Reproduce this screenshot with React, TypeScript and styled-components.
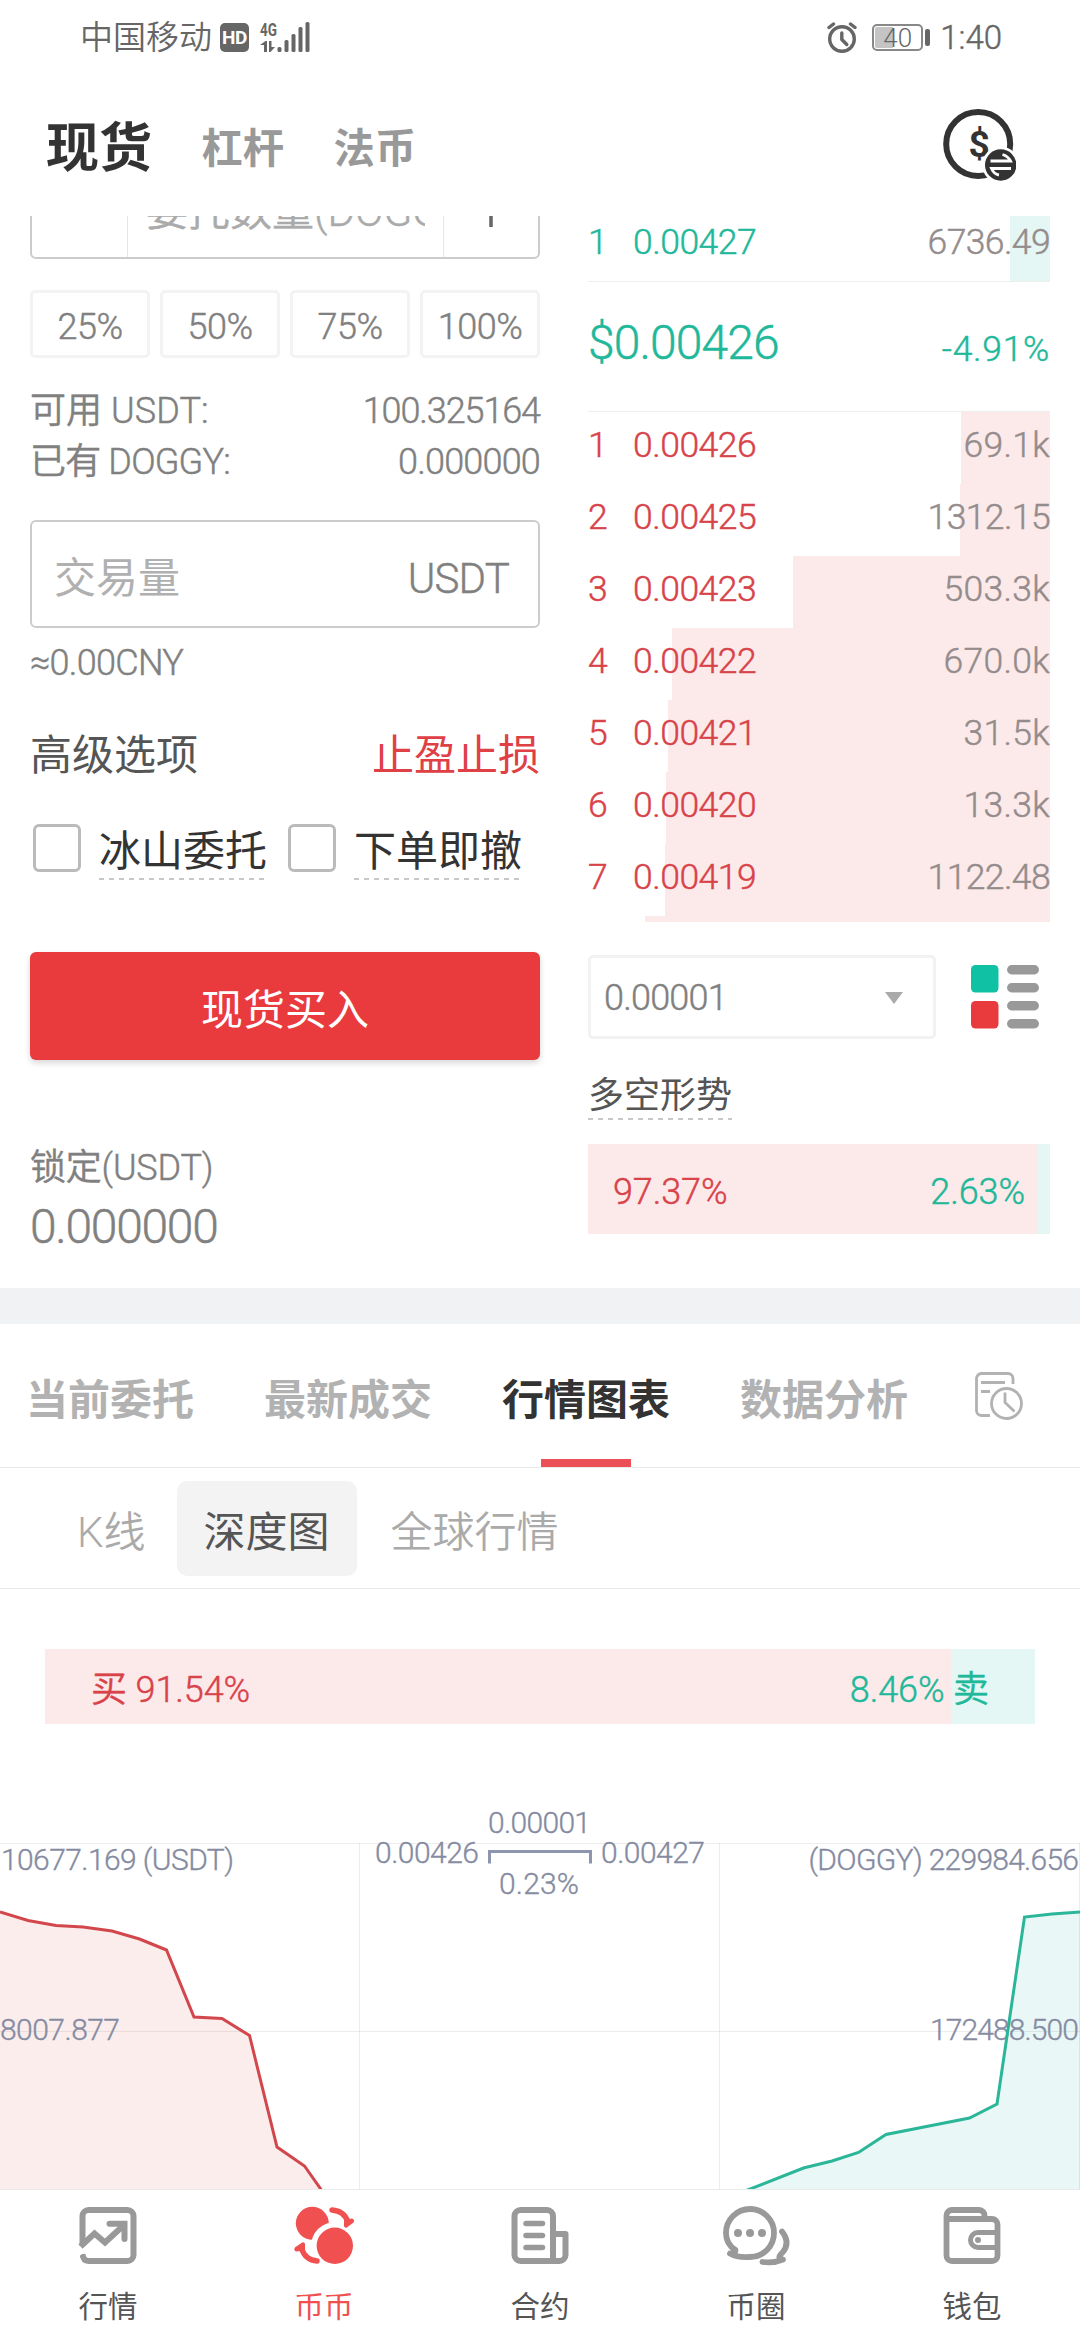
import React from "react";
import styled, { createGlobalStyle } from "styled-components";

const RED = "#e93a3d";
const GREEN = "#1fb89a";
const RED_SOFT = "#fceaea";
const GREEN_SOFT = "#e4f7f5";

const GlobalStyle = createGlobalStyle`
  * { box-sizing: border-box; }
  html, body { margin: 0; padding: 0; background: #fff; }
  body {
    font-family: Roboto, "Noto Sans CJK SC", sans-serif;
    font-size: 36px;
    color: #808080;
  }
`;

/* Weight between Roboto Light and Regular, used for all figures. */
const book = `
  font-weight: 350;
  -webkit-text-stroke: 0.45px currentColor;
`;

const Screen = styled.main`
  width: 1080px;
  height: 2340px;
  display: flex;
  flex-direction: column;
  overflow: hidden;
  background: #fff;
  > * { flex-shrink: 0; }
`;

/* ---------- status bar ---------- */
const StatusBar = styled.header`
  height: 74px;
  padding: 0 78px 0 80px;
  display: flex;
  align-items: center;
  justify-content: space-between;
  color: #666;
`;
const StatusGroup = styled.div`
  display: flex;
  align-items: center;
`;
const Carrier = styled.span`
  font-size: 33px;
  line-height: 40px;
  padding-top: 2px;
  font-weight: 350;
  margin-right: 8px;
`;
const HdBadge = styled.span`
  width: 29px;
  height: 29px;
  border-radius: 5px;
  background: #666;
  color: #fff;
  font-size: 19px;
  font-weight: 700;
  line-height: 29px;
  text-align: center;
  letter-spacing: -0.5px;
  margin-right: 11px;
`;
const Battery = styled.span`
  width: 51px;
  height: 27px;
  margin: 0 2px 0 15px;
  border: 2px solid #888;
  border-radius: 5px;
  padding: 1px;
  font-size: 26px;
  font-weight: 300;
  line-height: 22px;
  text-align: center;
  background: linear-gradient(90deg, #c4c4c4 40%, transparent 40%) content-box;
`;
const BatteryTip = styled.span`
  width: 5px;
  height: 17px;
  border-radius: 2px;
  background: #666;
  margin-right: 10px;
`;
const Clock = styled.span`
  font-size: 33px;
  line-height: 40px;
  padding-top: 1px;
  ${book}
`;

/* ---------- page header ---------- */
const PageHeader = styled.nav`
  height: 142px;
  padding: 0 64px 0 46px;
  display: flex;
  align-items: center;
  justify-content: space-between;
`;
const MarketTabs = styled.div`
  display: flex;
  align-items: center;
  gap: 49.5px;
  padding-top: 8px;
`;
const MarketTab = styled.span<{ $active?: boolean }>`
  font-size: ${(p) => (p.$active ? 53 : 41.3)}px;
  line-height: 60px;
  font-weight: 700;
  color: ${(p) => (p.$active ? "#333" : "#999")};
`;

/* ---------- trading panel ---------- */
const TradePanel = styled.section`
  height: 1072px;
  padding: 0 30px;
  display: flex;
  gap: 48px;
  overflow: hidden;
`;
const OrderForm = styled.div`
  width: 510px;
  display: flex;
  flex-direction: column;
  > * { flex-shrink: 0; }
`;
const QuantityBox = styled.div`
  height: 108px;
  margin-top: -65px;
  border: 2px solid #ccc;
  border-radius: 6px;
  display: grid;
  grid-template-columns: 95px minmax(0, 1fr) 94px;
  align-items: stretch;
`;
const StepCell = styled.div`
  display: flex;
  align-items: center;
  justify-content: center;
`;
const QuantityField = styled.div`
  border: solid #e6e6e6;
  border-width: 0 1px;
  padding: 7px 18px 0 18px;
  display: flex;
  min-width: 0;
`;
const Placeholder = styled.span`
  flex: 1;
  min-width: 0;
  overflow: hidden;
  white-space: nowrap;
  font-size: 42px;
  line-height: 104px;
  height: 97px;
  color: #aaa;
  ${book}
`;
const PercentRow = styled.div`
  margin-top: 31px;
  display: grid;
  grid-template-columns: repeat(4, 120px);
  gap: 10px;
`;
const PercentButton = styled.button`
  height: 68px;
  padding: 4px 0 0;
  border: 3px solid #f3f3f3;
  border-radius: 5px;
  background: #fff;
  font: 350 36px/60px Roboto, sans-serif;
  letter-spacing: -0.5px;
  color: #808080;
  ${book}
`;
const BalanceList = styled.div`
  margin-top: 27px;
`;
const BalanceRow = styled.div`
  height: 51px;
  display: flex;
  justify-content: space-between;
  line-height: 53px;
  ${book}
  color: #808080;
`;
const Tracked = styled.span<{ $tracking: number }>`
  letter-spacing: ${(p) => p.$tracking}px;
`;
const AmountInput = styled.div`
  margin-top: 33px;
  height: 108px;
  border: 2px solid #ccc;
  border-radius: 6px;
  padding: 9px 29px 0 22px;
  display: flex;
  justify-content: space-between;
  align-items: center;
  font-size: 42px;
  line-height: 60px;
  color: #808080;
`;
const AmountHint = styled.span`
  color: #b0b0b0;
`;
const AmountUnit = styled.span`
  letter-spacing: -0.8px;
  ${book}
`;
const Approx = styled.div`
  margin-top: 14px;
  height: 40px;
  line-height: 42px;
  ${book}
  letter-spacing: -0.7px;
  color: #808080;
`;
const AdvancedRow = styled.div`
  margin-top: 48px;
  height: 50px;
  display: flex;
  justify-content: space-between;
  font-size: 42px;
  line-height: 52px;
  color: #555;
`;
const StopLink = styled.span`
  color: #df4045;
`;
const CheckRow = styled.div`
  margin-top: 44px;
  height: 48px;
  padding-left: 3px;
  display: flex;
  align-items: flex-start;
`;
const CheckBox = styled.span`
  width: 48px;
  height: 48px;
  border: 3px solid #bbb;
  border-radius: 6px;
  margin-right: 18px;
  flex: none;
`;
const dashed = `
  background: repeating-linear-gradient(90deg, #c8c8c8 0 5px, transparent 5px 10px) left bottom / 100% 2px no-repeat;
`;
const CheckLabel = styled.span`
  flex: none;
  height: 56px;
  margin-right: 21px;
  font-size: 42px;
  line-height: 56px;
  white-space: nowrap;
  color: #333;
  ${dashed}
`;
const BuyButton = styled.button`
  margin-top: 80px;
  height: 108px;
  padding: 9px 0 0;
  border: 0;
  border-radius: 6px;
  background: ${RED};
  box-shadow: 0 3px 6px rgba(0, 0, 0, 0.16);
  color: #fff;
  font: 400 42px/60px Roboto, "Noto Sans CJK SC", sans-serif;
`;
const LockedLabel = styled.div`
  margin-top: 87px;
  height: 40px;
  line-height: 43px;
  ${book}
  letter-spacing: -0.2px;
  color: #808080;
`;
const LockedValue = styled.div`
  margin-top: 13px;
  height: 52px;
  font-size: 48px;
  line-height: 54px;
  ${book}
  letter-spacing: -1.3px;
  color: #808080;
`;

/* ---------- order book ---------- */
const OrderBook = styled.div`
  width: 462px;
  display: flex;
  flex-direction: column;
  > * { flex-shrink: 0; }
`;
const BookRow = styled.div<{ $side: "buy" | "sell"; $depth: number }>`
  height: 72px;
  display: grid;
  grid-template-columns: 45px 1fr auto;
  font-size: 35.5px;
  line-height: 67px;
  ${book}
  letter-spacing: -0.5px;
  color: ${(p) => (p.$side === "sell" ? GREEN : "#d8434a")};
  background: linear-gradient(
    ${(p) => (p.$side === "sell" ? GREEN_SOFT : RED_SOFT)},
    ${(p) => (p.$side === "sell" ? GREEN_SOFT : RED_SOFT)}
  ) right / ${(p) => p.$depth}px 100% no-repeat;
`;
const BookAmount = styled.span<{ $wide?: boolean }>`
  color: #948c8c;
  letter-spacing: ${(p) => (p.$wide ? 0.3 : -0.6)}px;
`;
const Asks = styled.div`
  margin-top: -7px;
`;
const Bids = styled.div`
  height: 510px;
  overflow: hidden;
`;
const LastPrice = styled.div`
  height: 131px;
  border: solid #eee;
  border-width: 1px 0;
  display: flex;
  justify-content: space-between;
  color: ${GREEN};
  ${book}
`;
const PriceValue = styled.span`
  font-size: 48px;
  line-height: 122px;
  letter-spacing: -0.9px;
`;
const PriceChange = styled.span`
  font-size: 35.5px;
  line-height: 134px;
  letter-spacing: 0.7px;
`;
const PrecisionRow = styled.div`
  margin-top: 33px;
  height: 84px;
  padding-right: 11px;
  display: flex;
  align-items: center;
  justify-content: space-between;
`;
const PrecisionSelect = styled.div`
  width: 348px;
  height: 84px;
  border: 3px solid #f2f2f2;
  border-radius: 5px;
  padding: 2px 30px 0 13px;
  display: flex;
  align-items: center;
  justify-content: space-between;
  line-height: 76px;
  ${book}
  letter-spacing: -0.8px;
  color: #808080;
`;
const Caret = styled.span`
  border: solid transparent;
  border-width: 12px 9px 0;
  border-top-color: #aaa;
`;
const SentimentLabel = styled.span`
  margin-top: 35px;
  height: 46px;
  align-self: flex-start;
  line-height: 45px;
  color: #555;
  ${dashed}
`;
const RatioBar = styled.div<{ $buy: number; $height: number; $pad: number }>`
  height: ${(p) => p.$height}px;
  padding: 6px ${(p) => p.$pad}px 0;
  display: flex;
  align-items: center;
  justify-content: space-between;
  ${book}
  letter-spacing: -0.1px;
  line-height: 48px;
  background: linear-gradient(90deg, ${RED_SOFT} ${(p) => p.$buy}%, ${GREEN_SOFT} ${(p) => p.$buy}%);
`;
const BuyText = styled.span`
  color: #d8434a;
`;
const SellText = styled.span`
  color: ${GREEN};
`;
const Sentiment = styled.div`
  margin-top: 24px;
`;

/* ---------- chart section ---------- */
const Divider = styled.div`
  height: 36px;
  background: #f0f2f4;
`;
const SectionTabs = styled.nav`
  height: 144px;
  padding: 0 57px 0 26px;
  border-bottom: 1px solid #e8eaea;
  display: flex;
  align-items: stretch;
  justify-content: space-between;
`;
const TabList = styled.div`
  display: flex;
  gap: 70px;
`;
const SectionTab = styled.span<{ $active?: boolean }>`
  display: flex;
  flex-direction: column;
  align-items: center;
  justify-content: space-between;
  font-size: 42px;
  font-weight: 700;
  line-height: 153px;
  height: 143px;
  color: ${(p) => (p.$active ? "#333" : "#b2b2b2")};
  &::after {
    content: "";
    width: 90px;
    height: 8px;
    flex: none;
    margin-top: -18px;
    background: ${(p) => (p.$active ? "#ea5055" : "transparent")};
  }
`;
const HistoryIcon = styled.svg`
  width: 48px;
  height: 48px;
  margin-top: 48px;
`;
const ChartTabs = styled.nav`
  height: 121px;
  border-bottom: 1px solid #e8eaea;
  padding: 0 49px;
  display: flex;
  align-items: center;
`;
const ChartTab = styled.span<{ $active?: boolean }>`
  height: 95px;
  padding: 4px ${(p) => (p.$active ? 27 : 28)}px 0;
  margin-right: ${(p) => (p.$active ? 6 : 3)}px;
  border-radius: 10px;
  font-size: 42px;
  line-height: 95px;
  font-weight: ${(p) => (p.$active ? 400 : 350)};
  color: ${(p) => (p.$active ? "#555" : "#aaa")};
  background: ${(p) => (p.$active ? "#f3f3f3" : "transparent")};
`;
const DepthSummary = styled.div`
  margin: 60px 45px 0;
`;
const DepthChart = styled.svg`
  display: block;
  width: 1080px;
  height: 389px;
  margin-top: 76px;
  text {
    font-family: Roboto, sans-serif;
    font-size: 30px;
    font-weight: 350;
    fill: #858ba1;
    stroke: #858ba1;
    stroke-width: 0.35px;
  }
`;

/* ---------- bottom navigation ---------- */
const BottomNav = styled.nav`
  height: 151px;
  border-top: 1px solid #e8eaea;
  display: grid;
  grid-template-columns: repeat(5, 1fr);
`;
const NavItem = styled.a<{ $active?: boolean }>`
  display: flex;
  flex-direction: column;
  align-items: center;
  padding-top: 12px;
  color: ${(p) => (p.$active ? "#f05050" : "#999")};
  svg { width: 72px; height: 68px; }
`;
const NavLabel = styled.span<{ $active?: boolean }>`
  margin-top: 15px;
  font-size: 29.5px;
  line-height: 44px;
  color: ${(p) => (p.$active ? "#f05050" : "#555")};
`;

const SignalIcon = () => (
  <svg width="52" height="32" viewBox="0 0 52 32" fill="#666" overflow="visible">
    <text x="0" y="14.5" fontFamily="Roboto" fontWeight="700" fontSize="19" textLength="17" lengthAdjust="spacingAndGlyphs">4G</text>
    <path d="M4 31V24H0L5.5 20H7V31ZM9 20H11.500V26H15L10.500 31H9Z" />
    <rect x="17.500" y="26" width="4" height="5" rx="1.500" />
    <rect x="24.500" y="19" width="4" height="12" rx="1.500" />
    <rect x="31.500" y="13" width="4" height="18" rx="1.500" />
    <rect x="38.500" y="6" width="4" height="25" rx="1.500" />
    <rect x="45.500" y="1" width="4" height="30" rx="1.500" />
  </svg>
);

const AlarmIcon = () => (
  <svg width="30" height="31" viewBox="0 0 30 31" fill="none" stroke="#666" strokeWidth="3.400" strokeLinecap="round">
    <circle cx="15" cy="17" r="12.300" />
    <path d="M14.800 11v6.500l5 5" strokeLinejoin="round" />
    <path d="M2 5.500 6.500 2M28 5.500 23.500 2" />
  </svg>
);

const CurrencyIcon = () => (
  <svg width="74" height="74" viewBox="0 0 74 74">
    <circle cx="36.200" cy="36" r="32" fill="none" stroke="#333" strokeWidth="6" />
    <text x="37" y="48.500" textAnchor="middle" fontFamily="Roboto" fontWeight="700" fontSize="37" fill="#333">$</text>
    <circle cx="58.700" cy="57" r="18.500" fill="#fff" />
    <circle cx="58.700" cy="57" r="15.700" fill="#333" />
    <path d="M48.500 53H68.500C67 50 64 47.500 60.500 46.500M69 60.500H49.500C51 64 54 66.500 57 67" fill="none" stroke="#fff" strokeWidth="2.800" />
  </svg>
);

const BookModeIcon = () => (
  <svg width="68" height="64" viewBox="0 0 68 64">
    <rect width="27.500" height="27.500" rx="4.500" fill="#10c2a3" />
    <rect y="36" width="27.500" height="27.500" rx="4.500" fill={RED} />
    {[0, 18, 36, 54].map((y) => (
      <rect key={y} x="36" y={y} width="32" height="9.500" rx="4.700" fill="#999" />
    ))}
  </svg>
);

const marketIcon = (
  <svg viewBox="-7.500 -5 72 68" fill="none" stroke="currentColor" strokeWidth="6" strokeLinecap="round">
    <path d="M3 39V9a6 6 0 0 1 6-6H48a6 6 0 0 1 6 6V48a6 6 0 0 1-6 6H9C6 54 3.500 52 3 47" strokeLinecap="butt" />
    <path d="M1 39.500 15 26.500 25.500 35.500 45 17.500" strokeLinecap="butt" />
    <path d="M30 16.800H45V32" strokeLinejoin="miter" />
    <path d="M-2 48.500 10 38.500" stroke="#fff" strokeWidth="3.500" strokeLinecap="butt" />
  </svg>
);

const coinIcon = (
  <svg viewBox="-7 -5 72 68" fill="currentColor">
    <circle cx="17.300" cy="16.300" r="16.500" />
    <circle cx="39.800" cy="38.800" r="23.700" fill="#fff" />
    <circle cx="39.800" cy="38.800" r="18.200" />
    <path d="M37 3C45 3.500 50.500 8 53 15" fill="none" stroke="currentColor" strokeWidth="5.500" strokeLinecap="round" />
    <path d="M57 11.500a2.500 2.500 0 0 1 1.500 4l-6 4.500a2 2 0 0 1-3.500-1.500L49 13Z" />
    <path d="M22 54C14 53.500 9 49 6.500 41.500" fill="none" stroke="currentColor" strokeWidth="5.500" strokeLinecap="round" />
    <path d="M1 44.500a2.500 2.500 0 0 1-.5-4.500L6.500 36a2 2 0 0 1 3.500 1.500L10 43.500Z" />
  </svg>
);

const contractIcon = (
  <svg viewBox="-7.500 -5 72 68" fill="none" stroke="currentColor" strokeWidth="6" strokeLinecap="round">
    <path d="M41.500 54H9a6 6 0 0 1-6-6V9a6 6 0 0 1 6-6H35.500a6 6 0 0 1 6 6V54H48a6 6 0 0 0 6-6V27H43" strokeLinejoin="round" />
    <path d="M14.500 16.500H31M14.500 28.500H31M14.500 40.500H31" strokeWidth="5.500" />
  </svg>
);

const communityIcon = (
  <svg viewBox="-3 -5 72 68" fill="none" stroke="currentColor" strokeWidth="5.800" strokeLinecap="round" strokeLinejoin="round">
    <path d="M12.500 43C6 39 3 33 3 26A24 24 0 1 1 27 50C20 50.500 12 49.500 7 46.500 10 46.500 12.500 45.500 12.500 43Z" />
    <g fill="currentColor" stroke="none">
      <circle cx="15" cy="26" r="4" />
      <circle cx="27" cy="26" r="4" />
      <circle cx="39" cy="26" r="4" />
    </g>
    <path d="M59 24.500C64.500 31.500 65 39 59.500 45.500 56 49 54.500 51 60 52.500 54 55 46 56 39.500 55" />
  </svg>
);

const walletIcon = (
  <svg viewBox="-7.500 -5 72 68" fill="none" stroke="currentColor" strokeWidth="5.800" strokeLinejoin="round">
    <path d="M3 12V48.500a5.500 5.500 0 0 0 5.500 5.500H48.500a5.500 5.500 0 0 0 5.500-5.500V17.500a5.500 5.500 0 0 0-5.500-5.500H3V8.500A5.500 5.500 0 0 1 8.500 3H35.500c3.500 0 5.500 2.500 5.500 6V12" />
    <path d="M54 25.500H34.500a7.500 7.500 0 0 0 0 15H54" strokeWidth="5" />
    <circle cx="34.500" cy="33" r="3" fill="currentColor" stroke="none" />
  </svg>
);

const bids = [
  ["1", "0.00426", "69.1k", 89],
  ["2", "0.00425", "1312.15", 90],
  ["3", "0.00423", "503.3k", 257],
  ["4", "0.00422", "670.0k", 378],
  ["5", "0.00421", "31.5k", 382],
  ["6", "0.00420", "13.3k", 384],
  ["7", "0.00419", "1122.48", 385],
  ["", "", "", 405],
] as const;

const navItems = [
  { label: "行情", icon: marketIcon },
  { label: "币币", icon: coinIcon, active: true },
  { label: "合约", icon: contractIcon },
  { label: "币圈", icon: communityIcon },
  { label: "钱包", icon: walletIcon },
];

const buyLine =
  "0,112 28,120.500 56,125.500 83,127 112,131 139.500,139 166.500,150 194,217 222,218.500 249.500,235.500 277,347 304.500,366 332,405";
const sellLine =
  "721,400 749,389.500 803.500,368 832,361 858.500,352.500 886,334.500 969.500,318 997,304 1024.500,117 1052,114 1080,112";

const Depth = () => (
  <DepthChart viewBox="0 0 1080 389">
    <polygon points={`${buyLine} 0,405`} fill="#fceded" />
    <polygon points={`${sellLine} 1080,400`} fill="#e9f7f6" />
    <path d="M0 43.500H1080M0 231.500H1080M359.500 43V389M719.500 43V389M1079.500 43V389" stroke="#000" strokeOpacity="0.07" />
    <text x="1" y="69.500" textLength="233">10677.169 (USDT)</text>
    <text x="0" y="239.500" textLength="120">8007.877</text>
    <text x="808.500" y="69.500" textLength="270.500">(DOGGY) 229984.656</text>
    <text x="930" y="239.500" textLength="149">172488.500</text>
    <text x="488" y="33" textLength="103">0.00001</text>
    <text x="375" y="63" textLength="104">0.00426</text>
    <text x="601" y="63" textLength="104">0.00427</text>
    <text x="499" y="93.500" textLength="80">0.23%</text>
    <path d="M489.500 63.500V51.500H590.500V63.500" fill="none" stroke="#8e95ae" strokeWidth="3" />
    <polyline points={buyLine} fill="none" stroke="#d2474c" strokeWidth="3" />
    <polyline points={sellLine} fill="none" stroke="#2bb699" strokeWidth="3" />
  </DepthChart>
);

export default function App() {
  return (
    <>
      <GlobalStyle />
      <Screen>
        <StatusBar>
          <StatusGroup>
            <Carrier>中国移动</Carrier>
            <HdBadge>HD</HdBadge>
            <SignalIcon />
          </StatusGroup>
          <StatusGroup>
            <AlarmIcon />
            <Battery>40</Battery>
            <BatteryTip />
            <Clock>1:40</Clock>
          </StatusGroup>
        </StatusBar>

        <PageHeader>
          <MarketTabs>
            <MarketTab $active>现货</MarketTab>
            <MarketTab>杠杆</MarketTab>
            <MarketTab>法币</MarketTab>
          </MarketTabs>
          <CurrencyIcon />
        </PageHeader>

        <TradePanel>
          <OrderForm>
            <QuantityBox>
              <StepCell />
              <QuantityField>
                <Placeholder>委托数量(DOGGY)</Placeholder>
              </QuantityField>
              <StepCell>
                <svg width="44" height="44" viewBox="0 0 44 44" stroke="#666" strokeWidth="3.500">
                  <path d="M22 0V44M0 22H44" />
                </svg>
              </StepCell>
            </QuantityBox>
            <PercentRow>
              {["25%", "50%", "75%", "100%"].map((p) => (
                <PercentButton key={p}>{p}</PercentButton>
              ))}
            </PercentRow>
            <BalanceList>
              <BalanceRow>
                <Tracked $tracking={0.1}>可用 USDT:</Tracked>
                <Tracked $tracking={-1.1}>100.325164</Tracked>
              </BalanceRow>
              <BalanceRow>
                <Tracked $tracking={-0.8}>已有 DOGGY:</Tracked>
                <Tracked $tracking={-0.8}>0.000000</Tracked>
              </BalanceRow>
            </BalanceList>
            <AmountInput>
              <AmountHint>交易量</AmountHint>
              <AmountUnit>USDT</AmountUnit>
            </AmountInput>
            <Approx>≈0.00CNY</Approx>
            <AdvancedRow>
              <span>高级选项</span>
              <StopLink>止盈止损</StopLink>
            </AdvancedRow>
            <CheckRow>
              <CheckBox />
              <CheckLabel>冰山委托</CheckLabel>
              <CheckBox />
              <CheckLabel>下单即撤</CheckLabel>
            </CheckRow>
            <BuyButton>现货买入</BuyButton>
            <LockedLabel>锁定(USDT)</LockedLabel>
            <LockedValue>0.000000</LockedValue>
          </OrderForm>

          <OrderBook>
            <Asks>
              <BookRow $side="sell" $depth={40}>
                <span>1</span>
                <span>0.00427</span>
                <BookAmount>6736.49</BookAmount>
              </BookRow>
            </Asks>
            <LastPrice>
              <PriceValue>$0.00426</PriceValue>
              <PriceChange>-4.91%</PriceChange>
            </LastPrice>
            <Bids>
              {bids.map(([rank, price, amount, depth]) => (
                <BookRow key={depth} $side="buy" $depth={depth}>
                  <span>{rank}</span>
                  <span>{price}</span>
                  <BookAmount $wide={amount.endsWith("k")}>{amount}</BookAmount>
                </BookRow>
              ))}
            </Bids>
            <PrecisionRow>
              <PrecisionSelect>
                0.00001
                <Caret />
              </PrecisionSelect>
              <BookModeIcon />
            </PrecisionRow>
            <SentimentLabel>多空形势</SentimentLabel>
            <Sentiment>
              <RatioBar $buy={97.37} $height={90} $pad={25}>
                <BuyText>97.37%</BuyText>
                <SellText>2.63%</SellText>
              </RatioBar>
            </Sentiment>
          </OrderBook>
        </TradePanel>

        <Divider />

        <SectionTabs>
          <TabList>
            <SectionTab>当前委托</SectionTab>
            <SectionTab>最新成交</SectionTab>
            <SectionTab $active>行情图表</SectionTab>
            <SectionTab>数据分析</SectionTab>
          </TabList>
          <HistoryIcon viewBox="0 0 48 48" fill="none" stroke="#b2b2b2" strokeWidth="2.800">
            <path d="M38 12V6.500a5 5 0 0 0-5-5H6.500a5 5 0 0 0-5 5V38.500a5 5 0 0 0 5 5H15" />
            <path d="M6 10.500H30M6 19.500H15" />
            <circle cx="31.500" cy="31.500" r="15" />
            <path d="M30 20.500V30.500L39.500 39.500" />
          </HistoryIcon>
        </SectionTabs>

        <ChartTabs>
          <ChartTab>K线</ChartTab>
          <ChartTab $active>深度图</ChartTab>
          <ChartTab>全球行情</ChartTab>
        </ChartTabs>

        <DepthSummary>
          <RatioBar $buy={91.54} $height={75} $pad={46}>
            <BuyText>买 91.54%</BuyText>
            <SellText>8.46% 卖</SellText>
          </RatioBar>
        </DepthSummary>

        <Depth />

        <BottomNav>
          {navItems.map((item) => (
            <NavItem key={item.label} $active={item.active}>
              {item.icon}
              <NavLabel $active={item.active}>{item.label}</NavLabel>
            </NavItem>
          ))}
        </BottomNav>
      </Screen>
    </>
  );
}
